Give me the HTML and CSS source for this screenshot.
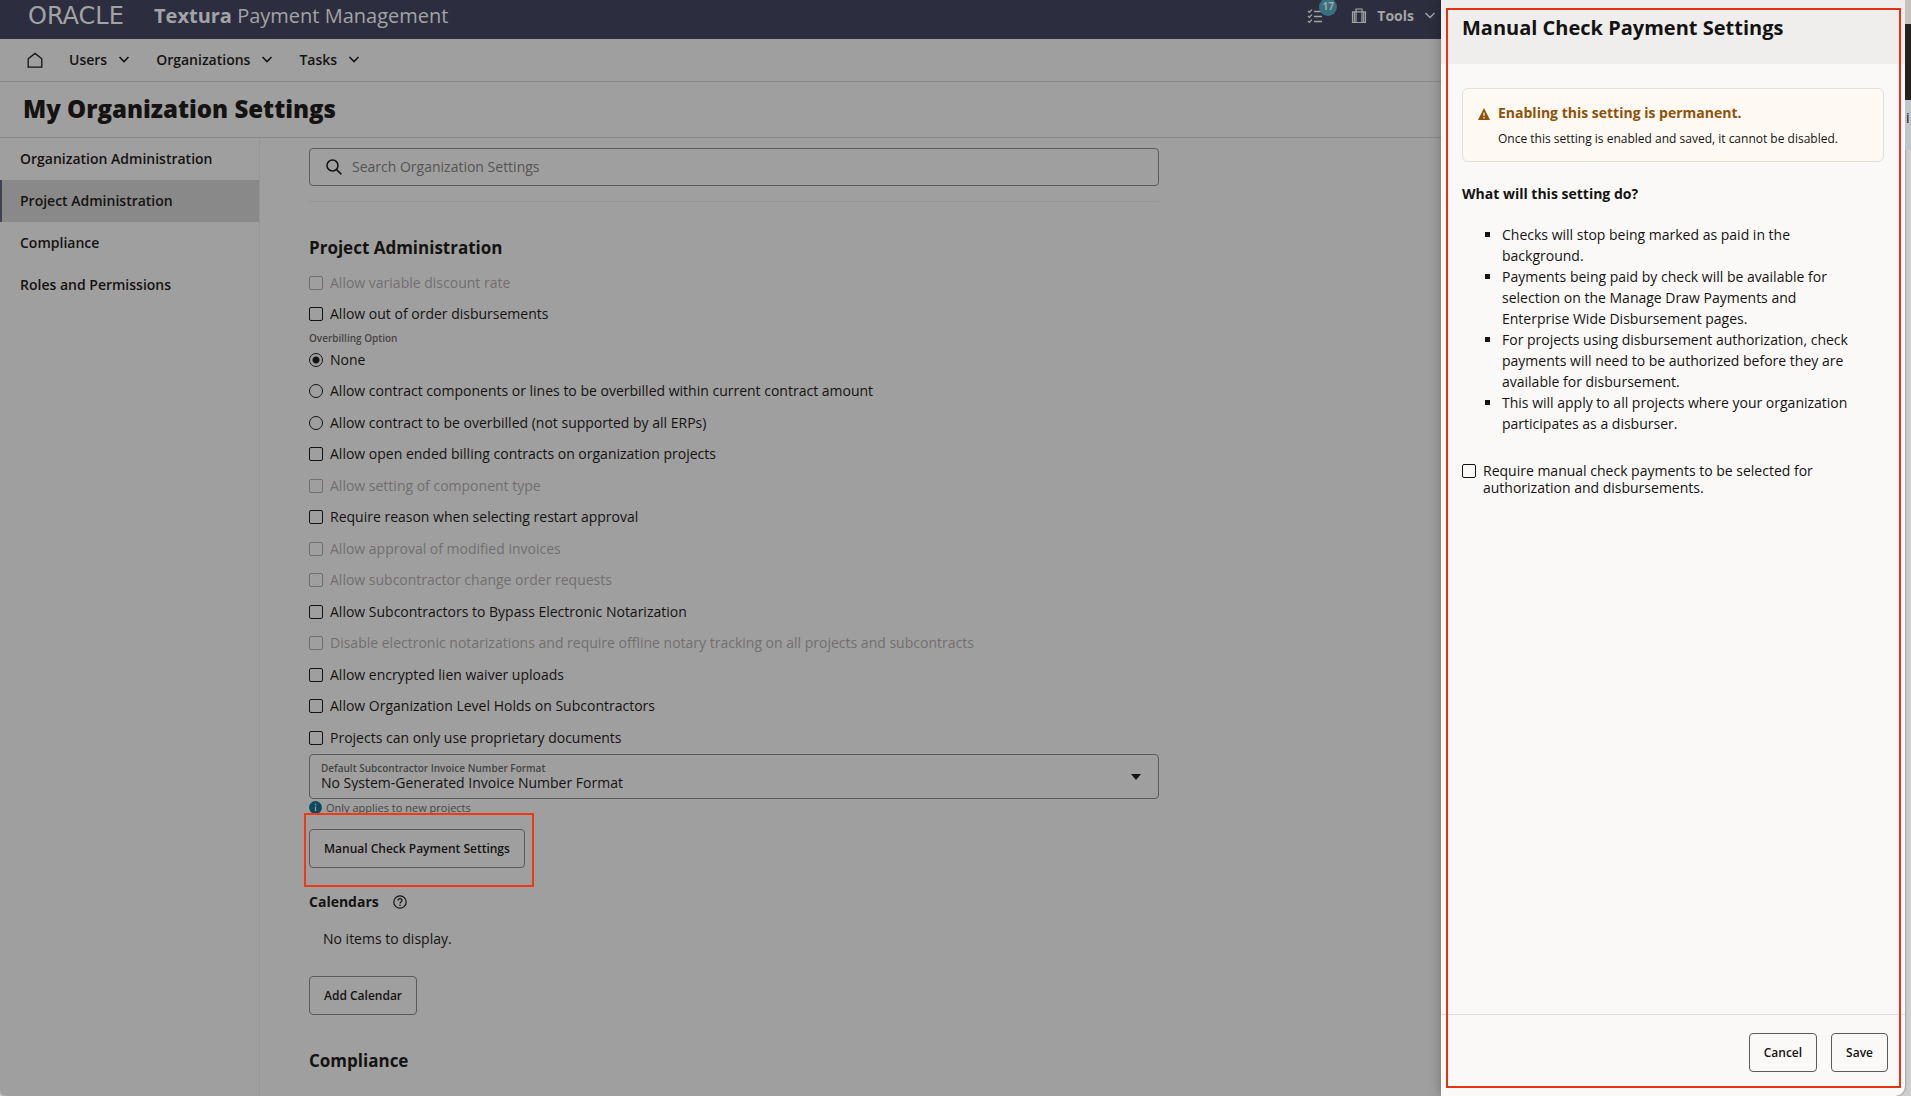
FILE: index.html
```html
<!DOCTYPE html>
<html lang="en">

<head>
    <meta charset="UTF-8">
    <meta name="viewport" content="width=device-width, initial-scale=1.0">
    <title>Textura Payment Management</title>
    <link rel="stylesheet" href="styles.css">
</head>

<body>
    <div class="window">
        <div class="page">
            <header class="topbar">
                <div class="logo">ORACLE</div>
                <div class="product"><b>Textura</b> Payment Management</div>
                <div class="tools">
                    <button class="tasks-btn" aria-label="Tasks">
                        <svg width="16" height="16" viewBox="0 0 16 16" fill="none" stroke="currentColor" stroke-width="1.3">
                            <path d="M1 3l1.3 1.3L5 1.6M1 8l1.3 1.3L5 6.6M1 13l1.3 1.3L5 11.6M7 3.5h8M7 8.5h8M7 13.5h8" />
                        </svg>
                        <span class="badge">17</span>
                    </button>
                    <button class="tools-btn">
                        <svg width="16" height="16" viewBox="0 0 16 16" fill="none" stroke="currentColor" stroke-width="1.2">
                            <path d="M1.5 3.8h13v10.7h-13zM5 14.5V1h6v13.5M3.3 3.8v10.7M12.7 3.8v10.7" />
                        </svg>
                        Tools
                        <svg width="12" height="12" viewBox="0 0 12 12" fill="none" stroke="currentColor" stroke-width="1.5">
                            <path d="M1.5 3L6 7.5 10.5 3" />
                        </svg>
                    </button>
                </div>
            </header>

            <nav class="nav">
                <a class="home" href="#" aria-label="Home">
                    <svg width="16" height="16" viewBox="0 0 16 16" fill="none" stroke="currentColor" stroke-width="1.3">
                        <path d="M1.2 15.2V6.8L8 1.4l6.8 5.4v8.4z" />
                    </svg>
                </a>
                <button class="nav-item">Users
                    <svg width="12" height="12" viewBox="0 0 12 12" fill="none" stroke="currentColor" stroke-width="1.6">
                        <path d="M1.5 3L6 7.5 10.5 3" />
                    </svg>
                </button>
                <button class="nav-item">Organizations
                    <svg width="12" height="12" viewBox="0 0 12 12" fill="none" stroke="currentColor" stroke-width="1.6">
                        <path d="M1.5 3L6 7.5 10.5 3" />
                    </svg>
                </button>
                <button class="nav-item">Tasks
                    <svg width="12" height="12" viewBox="0 0 12 12" fill="none" stroke="currentColor" stroke-width="1.6">
                        <path d="M1.5 3L6 7.5 10.5 3" />
                    </svg>
                </button>
            </nav>

            <h1 class="title">My Organization Settings</h1>

            <div class="main">
                <ul class="sidebar">
                    <li><a href="#">Organization Administration</a></li>
                    <li><a class="active" href="#">Project Administration</a></li>
                    <li><a href="#">Compliance</a></li>
                    <li><a href="#">Roles and Permissions</a></li>
                </ul>

                <div class="content">
                    <div class="search">
                        <svg width="16" height="16" viewBox="0 0 16 16" fill="none" stroke="currentColor" stroke-width="1.5">
                            <circle cx="6.5" cy="6.5" r="5.5" />
                            <path d="M10.6 10.6l4.8 4.8" />
                        </svg>
                        <input type="text" placeholder="Search Organization Settings" aria-label="Search Organization Settings">
                    </div>

                    <h2>Project Administration</h2>
                    <div class="options">
                        <label class="disabled"><input type="checkbox" disabled>Allow variable discount rate</label>
                        <label><input type="checkbox">Allow out of order disbursements</label>
                    </div>
                    <p class="hint-label">Overbilling Option</p>
                    <div class="options">
                        <label><input type="radio" name="overbilling" checked>None</label>
                        <label><input type="radio" name="overbilling">Allow contract components or lines to be overbilled within current contract amount</label>
                        <label><input type="radio" name="overbilling">Allow contract to be overbilled (not supported by all ERPs)</label>
                        <label><input type="checkbox">Allow open ended billing contracts on organization projects</label>
                        <label class="disabled"><input type="checkbox" disabled>Allow setting of component type</label>
                        <label><input type="checkbox">Require reason when selecting restart approval</label>
                        <label class="disabled"><input type="checkbox" disabled>Allow approval of modified invoices</label>
                        <label class="disabled"><input type="checkbox" disabled>Allow subcontractor change order requests</label>
                        <label><input type="checkbox">Allow Subcontractors to Bypass Electronic Notarization</label>
                        <label class="disabled"><input type="checkbox" disabled>Disable electronic notarizations and require offline notary tracking on all projects and subcontracts</label>
                        <label><input type="checkbox">Allow encrypted lien waiver uploads</label>
                        <label><input type="checkbox">Allow Organization Level Holds on Subcontractors</label>
                        <label><input type="checkbox">Projects can only use proprietary documents</label>
                    </div>

                    <div class="select-box">
                        <div class="select-text">
                            <label for="format">Default Subcontractor Invoice Number Format</label>
                            <select id="format">
                                <option>No System-Generated Invoice Number Format</option>
                            </select>
                        </div>
                        <svg width="10" height="6" viewBox="0 0 10 6" fill="currentColor">
                            <path d="M0 0h10L5 6z" />
                        </svg>
                    </div>
                    <p class="note">
                        <svg width="13" height="13" viewBox="0 0 13 13">
                            <circle cx="6.5" cy="6.5" r="6.5" fill="#0c4a5e" />
                            <path d="M6.5 5.5V10M6.5 2.8v1.5" stroke="#a09f9f" stroke-width="1.3" />
                        </svg>
                        Only applies to new projects
                    </p>

                    <div class="highlight">
                        <button class="btn">Manual Check Payment Settings</button>
                    </div>

                    <h3>Calendars
                        <svg width="14" height="14" viewBox="0 0 14 14" fill="none" stroke="currentColor" stroke-width="1.2">
                            <circle cx="7" cy="7" r="6.2" />
                            <path d="M5 5.6C5 3 9 3 9 5.4 9 7 7 6.8 7 8.5M7 9.6v1.3" />
                        </svg>
                    </h3>
                    <p class="empty">No items to display.</p>
                    <button class="btn">Add Calendar</button>
                    <h2 class="compliance">Compliance</h2>
                </div>
            </div>
        </div>

        <aside class="drawer">
            <h2 class="drawer-title">Manual Check Payment Settings</h2>
            <div class="drawer-body">
                <div class="alert">
                    <svg width="12" height="12" viewBox="0 0 12 12">
                        <path d="M6 0l6 12H0z" fill="#8f520a" />
                        <path d="M6 4.5V8M6 9v1.4" stroke="#fff8f1" stroke-width="1.2" />
                    </svg>
                    <div>
                        <h4>Enabling this setting is permanent.</h4>
                        <p>Once this setting is enabled and saved, it cannot be disabled.</p>
                    </div>
                </div>
                <h3 class="question">What will this setting do?</h3>
                <ul class="effects">
                    <li>Checks will stop being marked as paid in the background.</li>
                    <li>Payments being paid by check will be available for selection on the Manage Draw Payments and Enterprise Wide Disbursement pages.</li>
                    <li>For projects using disbursement authorization, check payments will need to be authorized before they are available for disbursement.</li>
                    <li>This will apply to all projects where your organization participates as a disburser.</li>
                </ul>
                <label class="require"><input type="checkbox">Require manual check payments to be selected for authorization and disbursements.</label>
            </div>
            <div class="drawer-footer">
                <button class="btn">Cancel</button>
                <button class="btn">Save</button>
            </div>
        </aside>
    </div>
    <!-- desktop behind the window -->
    <div class="desktop">
        <div class="desk-top"></div>
        <div class="desk-dark"></div>
        <div class="desk-tab">i</div>
    </div>
</body>

</html>
```

FILE: styles.css
```css
* {
    box-sizing: border-box;
    margin: 0;
    padding: 0;
}

body {
    display: flex;
    height: 100vh;
    overflow: hidden;
    background-color: #cfcfcf;
    color: #141312;
    font-family: "Open Sans", "Noto Sans", sans-serif;
    font-size: 14px;
    line-height: 20px;
}

button,
input,
select {
    color: inherit;
    font: inherit;
}

button {
    border: none;
    background: none;
    cursor: pointer;
}

a {
    color: inherit;
    text-decoration: none;
}

ul {
    list-style: none;
}

svg {
    flex: none;
}

.window {
    flex: 1;
    display: flex;
    min-width: 0;
    border-radius: 0 0 10px 6px;
    overflow: hidden;
    box-shadow: 0 0 3px #777;
}

.page {
    flex: 1;
    display: flex;
    flex-direction: column;
    min-width: 0;
    background-color: #a09f9f;
}

/* top bar */
.topbar {
    flex: none;
    display: flex;
    height: 39px;
    padding: 0 5px 8px 28px;
    align-items: center;
    background-color: #2c2e3f;
    color: #a3a3a6;
}

.logo {
    width: 126px;
    font-family: "DejaVu Sans", sans-serif;
    font-size: 24px;
}

.product {
    font-size: 20px;
}

.tools {
    display: flex;
    gap: 28px;
    margin-left: auto;
}

.tasks-btn {
    position: relative;
    display: flex;
    align-items: center;
}

.badge {
    position: absolute;
    top: -8px;
    left: 12px;
    width: 18px;
    height: 18px;
    border-radius: 50%;
    background-color: #35707f;
    font-size: 10px;
    font-weight: bold;
    line-height: 17px;
}

.tools-btn {
    display: flex;
    gap: 10px;
    align-items: center;
    font-weight: bold;
}

/* menu */
.nav {
    flex: none;
    display: flex;
    gap: 26px;
    height: 43px;
    padding: 0 27px;
    align-items: center;
    border-bottom: 1px solid #8b8a8a;
}

.home {
    display: flex;
}

.nav-item {
    display: flex;
    gap: 11px;
    align-items: center;
    font-weight: 600;
}

.title {
    flex: none;
    height: 56px;
    padding-left: 23px;
    border-bottom: 1px solid #8b8a8a;
    font-size: 24px;
    font-weight: 800;
    line-height: 54px;
}

.main {
    flex: 1;
    display: flex;
    min-height: 0;
}

.sidebar {
    flex: none;
    width: 260px;
    border-right: 1px solid #979696;
    font-weight: 600;
}

.sidebar a {
    display: block;
    height: 42px;
    padding-left: 20px;
    line-height: 42px;
}

.sidebar .active {
    padding-left: 18px;
    border-left: 2px solid #3f4156;
    background-color: #8a8989;
}

.content {
    flex: 1;
    min-width: 0;
    max-width: 899px;
    padding: 10px 0 0 49px;
}

.search {
    display: flex;
    gap: 10px;
    height: 38px;
    padding: 0 16px;
    align-items: center;
    border: 1px solid #5c5b5a;
    border-radius: 4px;
}

.search input {
    flex: 1;
    border: none;
    outline: none;
    background: none;
}

.search input::placeholder {
    color: #555453;
}

h2 {
    margin-top: 15px;
    padding-top: 34px;
    border-top: 1px solid #979696;
    font-size: 17px;
    line-height: 24px;
}

.options {
    display: flex;
    flex-direction: column;
}

.options label {
    display: flex;
    gap: 7px;
    height: 31px;
    align-items: center;
}

.options label:nth-child(even) {
    height: 32px;
}

.options .disabled {
    color: #706f6f;
}

input[type="checkbox"],
input[type="radio"] {
    flex: none;
    appearance: none;
    width: 14px;
    height: 14px;
    border: 1px solid currentColor;
    border-radius: 2px;
}

input[type="radio"] {
    border-radius: 50%;
}

input[type="radio"]:checked {
    background: radial-gradient(circle, currentColor 3px, transparent 4px);
}

h2 + .options {
    padding-top: 7px;
}

.hint-label {
    padding-top: 2px;
    color: #454443;
    font-size: 10px;
    font-weight: 600;
    line-height: 12px;
}

.select-box {
    display: flex;
    height: 45px;
    margin-top: 1px;
    padding: 0 17px 0 11px;
    align-items: center;
    justify-content: space-between;
    border: 1px solid #5c5b5a;
    border-radius: 4px;
}

.select-text {
    display: flex;
    flex-direction: column;
}

.select-text label {
    color: #454443;
    font-size: 10px;
    font-weight: 600;
    line-height: 12px;
}

.select-text select {
    appearance: none;
    border: none;
    background: none;
    line-height: 17px;
}

.note {
    display: flex;
    gap: 4px;
    height: 14px;
    padding-top: 3px;
    align-items: center;
    overflow: hidden;
    color: #454443;
    font-size: 11px;
}

.btn {
    height: 39px;
    padding: 0 14px;
    border: 1px solid #5c5b5a;
    border-radius: 4px;
    font-size: 12px;
    font-weight: 600;
}

/* red frame round the button */
.highlight {
    width: 230px;
    height: 74px;
    margin-left: -5px;
    padding: 14px 3px;
    border: 2px solid #f03a14;
}

h3 {
    display: flex;
    gap: 14px;
    margin-top: 5px;
    align-items: center;
    font-size: 14px;
}

.empty {
    padding: 17px 14px 27px;
}

.content .compliance {
    margin-top: 0;
    border-top: none;
}

/* drawer */
.drawer {
    position: relative;
    flex: none;
    display: flex;
    flex-direction: column;
    width: 464px;
    background-color: #fbf9f8;
    box-shadow: 0 0 12px rgba(0, 0, 0, 0.3);
}

.drawer::after {
    content: "";
    position: absolute;
    inset: 8px 4px 8px 5px;
    border: 2px solid #e23415;
    pointer-events: none;
}

.drawer-title {
    height: 64px;
    margin: 0;
    padding: 12px 21px;
    border: none;
    background-color: #efeeed;
    font-size: 20px;
    line-height: 32px;
}

.drawer-body {
    flex: 1;
    padding: 24px 21px;
}

.alert {
    display: flex;
    gap: 8px;
    height: 74px;
    padding: 14px 15px;
    border: 1px solid #e2dfdc;
    border-radius: 6px;
    background-color: #fff9f3;
}

.alert svg {
    margin-top: 5px;
}

.alert h4 {
    color: #8f520a;
}

.alert p {
    margin-top: 6px;
    font-size: 12px;
}

.question {
    margin-top: 22px;
}

.effects {
    margin: 20px 0 28px;
    padding: 0 34px 0 40px;
    list-style: square;
    line-height: 21px;
}

.require {
    display: flex;
    gap: 7px;
    padding-right: 60px;
    line-height: 17px;
}

.require input {
    margin-top: 2px;
}

.drawer-footer {
    display: flex;
    gap: 14px;
    height: 82px;
    padding: 18px 17px 24px;
    justify-content: flex-end;
    border-top: 1px solid #e0dedd;
}

/* strip of the desktop */
.desktop {
    width: 6px;
    overflow: hidden;
}

.desk-top {
    height: 24px;
    background-color: #c8c1bc;
}

.desk-dark {
    height: 76px;
    background-color: #24221f;
}

.desk-tab {
    height: 50px;
    padding: 8px 0 0 1px;
    background-color: #c0c6cc;
}
```
